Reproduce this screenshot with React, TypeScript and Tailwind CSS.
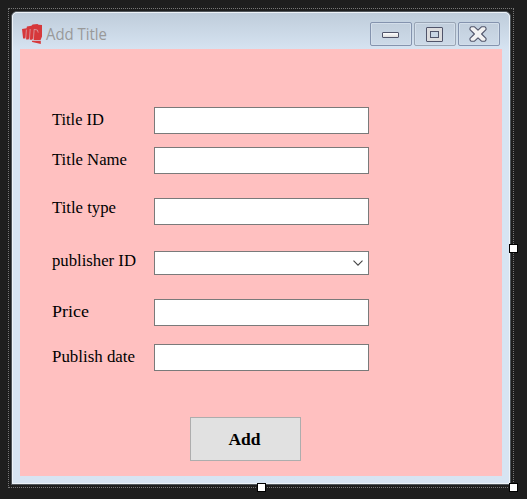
import React from "react";

type Field = {
  label: string;
  width: number;
  kind: "text" | "select";
  row: string;
  box: string;
  baseline: number;
};

const fields: Field[] = [
  { label: "Title ID", width: 52, kind: "text", row: "mt-[58px]", box: "h-[27px]", baseline: 16 },
  { label: "Title Name", width: 75, kind: "text", row: "mt-[13px]", box: "h-[27px]", baseline: 16 },
  { label: "Title type", width: 64, kind: "text", row: "mt-6", box: "h-[27px]", baseline: 13 },
  { label: "publisher ID", width: 84, kind: "select", row: "mt-[26px]", box: "h-6", baseline: 15 },
  { label: "Price", width: 37, kind: "text", row: "mt-6", box: "h-[27px]", baseline: 16 },
  { label: "Publish date", width: 83, kind: "text", row: "mt-[18px]", box: "h-[27px]", baseline: 16 },
];

function FistIcon() {
  return (
    <svg width="20" height="20" viewBox="0 0 20 20" className="shrink-0">
      <path
        fill="#d6383b"
        d="M0 5 4.6 4.2 4.9 2.4 9.4 1.8 10.6 .5 15.5 0 16.5 .7 20 .9V12.5L18.6 16H11.6L11.2 14.2 10.2 15.7H7.9L7.3 13.6 6.6 15.6H4.2L3.6 13.2 3 14.6H1.1Z"
      />
      <path fill="#d6383b" d="M9.8 16.7H18.8V20L14.6 19 10.2 18Z" />
      <path
        fill="none"
        stroke="#d9b3ba"
        strokeWidth="0.7"
        d="M4.4 5.6 3.7 15M8.2 5 7.4 15.7M12.2 5.2 11.3 16M12.2 5.4 15.4 6 16.2 8.6"
      />
    </svg>
  );
}

function CaptionButton({ children, tone }: { children: React.ReactNode; tone: string }) {
  return (
    <div
      className={`flex h-6 w-[42px] items-center justify-center rounded-[2px] border bg-linear-to-b from-[#c1cedc] to-[#cddae8] pr-[2px] shadow-[inset_0_0_0_1px_#d3deea] ${tone}`}
    >
      {children}
    </div>
  );
}

function Handle({ className }: { className: string }) {
  return <div className={`absolute size-[9px] border border-black bg-white ${className}`} />;
}

export default function App() {
  return (
    <div className="relative h-[499px] w-[527px] overflow-hidden bg-[#1e1e1e] p-2">
      <div className="h-[480px] w-[506px] border border-dotted border-[#777] p-[2px]">
        <div className="h-[474px] w-[500px] rounded-t-[6px] border border-[#50565b] bg-[#d7e4f1]">
          <div className="flex h-full flex-col rounded-t-[5px] border border-[#eef3f8] bg-linear-to-b from-[#bfcddb] to-[#d7e4f2] to-[38px] px-[7px] pb-[7px]">
            <div className="flex h-9 shrink-0 items-start pr-[2px]">
              <div className="ml-[2px] mt-[11px]">
                <FistIcon />
              </div>
              <svg width="70" height="24" className="ml-1 mt-[9px] overflow-visible">
                <text
                  x="0"
                  y="18"
                  textLength="61"
                  lengthAdjust="spacingAndGlyphs"
                  className="fill-[#999999] font-['Open_Sans','Noto_Sans',sans-serif] text-[16px]"
                >
                  Add Title
                </text>
              </svg>
              <div className="ml-auto mt-[9px] flex gap-[2px]">
                <CaptionButton tone="border-[#8493ae]">
                  <div className="mt-px h-[6px] w-[17px] rounded-[1px] border border-[#50546a] bg-linear-to-b from-white to-[#dcdcdc]" />
                </CaptionButton>
                <CaptionButton tone="border-[#99a5b5]">
                  <div className="flex h-[15px] w-[17px] items-center justify-center rounded-[1px] border border-[#50546a] bg-[#dcdcde]">
                    <div className="h-[7px] w-[9px] border border-[#50546a] bg-[#c8d5e3]" />
                  </div>
                </CaptionButton>
                <CaptionButton tone="border-[#8493ae]">
                  <svg width="18" height="16" viewBox="0 0 18 16">
                    <path
                      d="M2 .8H5.5L9 4.2 12.5.8H16L17 2V3.7L12.6 8 17 12.3V14L16 15.2H12.5L9 11.8 5.5 15.2H2L1 14V12.3L5.4 8 1 3.7V2Z"
                      fill="#f2f2f2"
                      stroke="#50546a"
                      strokeWidth="1.1"
                      strokeLinejoin="round"
                    />
                  </svg>
                </CaptionButton>
              </div>
            </div>
            <div className="flex flex-1 flex-col bg-[#ffc0c0]">
              {fields.map((f) => (
                <div key={f.label} className={`flex shrink-0 items-center pl-8 ${f.row}`}>
                  <svg width="102" height="24" className="overflow-visible">
                    <text
                      x="0"
                      y={f.baseline}
                      textLength={f.width}
                      lengthAdjust="spacingAndGlyphs"
                      className="fill-black font-['Liberation_Serif',serif] text-[16.5px]"
                    >
                      {f.label}
                    </text>
                  </svg>
                  <div
                    className={`flex w-[215px] items-center justify-end border border-[#7a7a7a] bg-white ${f.box}`}
                  >
                    {f.kind === "select" && (
                      <svg width="10" height="6" viewBox="0 0 10 6" className="mr-[5px]">
                        <path d="M.5.7 5 5.2 9.5.7" fill="none" stroke="#444" strokeWidth="1.1" />
                      </svg>
                    )}
                  </div>
                </div>
              ))}
              <button className="ml-[170px] mt-[46px] flex h-11 w-[111px] items-center justify-center border border-[#adadad] bg-[#e1e1e1] pr-[2px] font-['Liberation_Serif',serif] text-[17.5px] font-bold text-black">
                Add
              </button>
            </div>
          </div>
        </div>
      </div>
      <Handle className="left-[509px] top-[244px]" />
      <Handle className="left-[257px] top-[483px]" />
      <Handle className="left-[509px] top-[483px]" />
    </div>
  );
}
